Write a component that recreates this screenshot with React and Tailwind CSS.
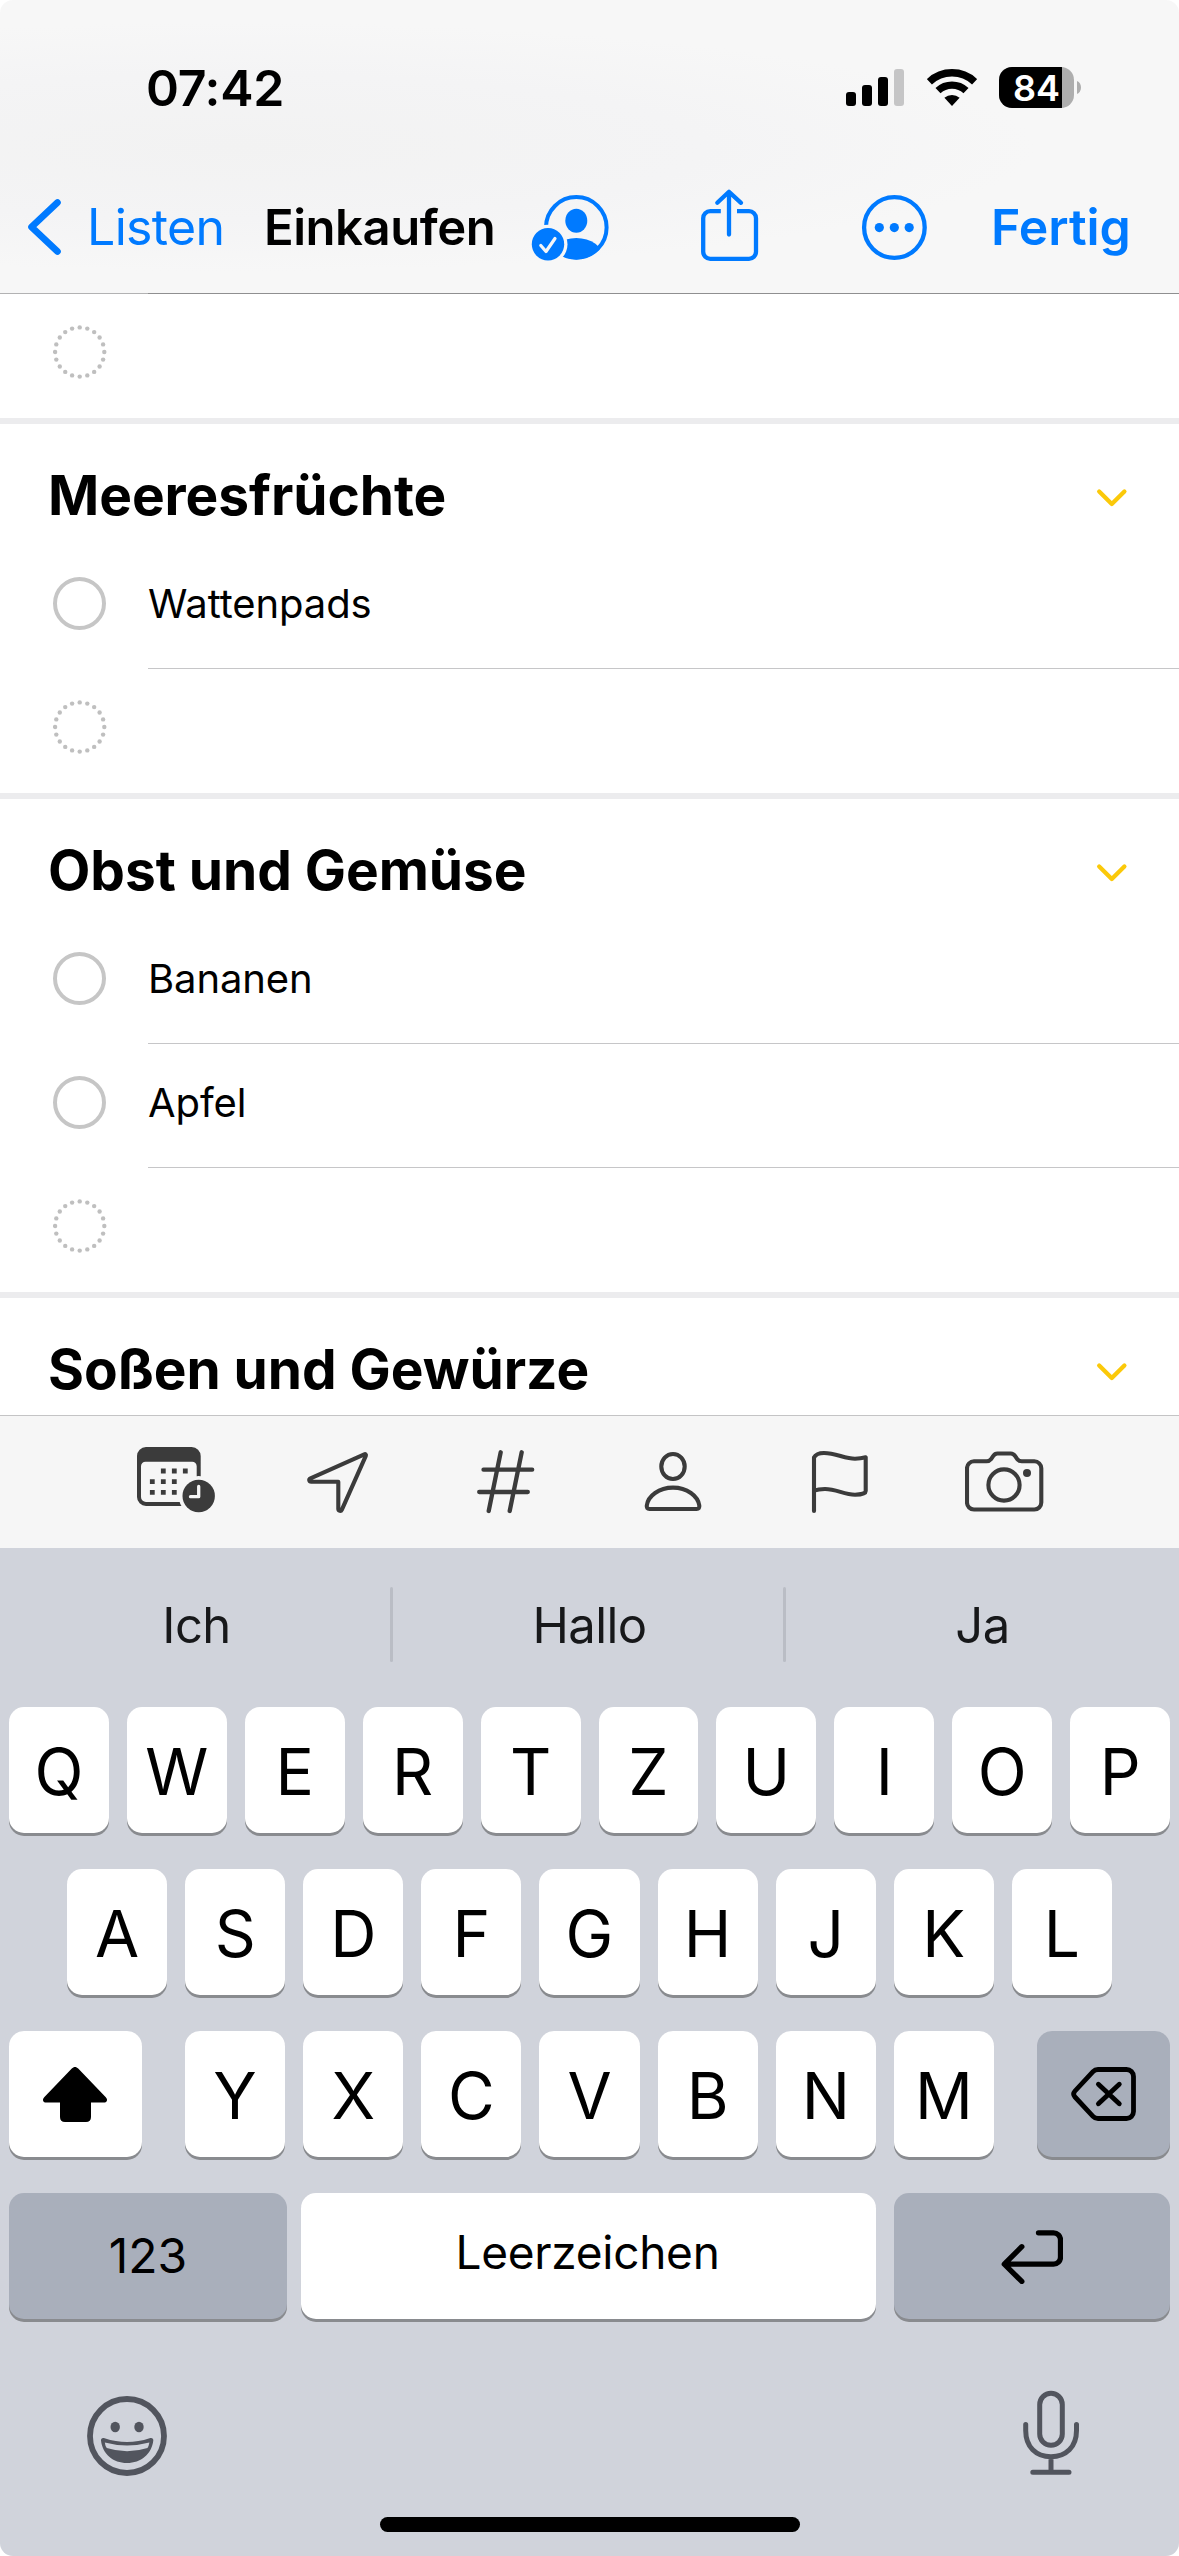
// Reminders list "Einkaufen" with the German keyboard open

const sections = [
  { title: 'Meeresfrüchte', items: ['Wattenpads'] },
  { title: 'Obst und Gemüse', items: ['Bananen', 'Apfel'] },
]

const suggestions = ['Ich', 'Hallo', 'Ja']

function StatusBar() {
  return (
    <div className="flex h-[175px] items-center justify-between pl-[146px] pr-[98px]">
      <span className="pt-[2px] text-[50px] font-semibold tracking-[-0.3px]">07:42</span>
      <div className="flex items-center">
        <svg className="h-[37px] w-[58px]" viewBox="0 0 58 37">
          <rect x="0" y="23" width="10" height="14" rx="3" />
          <rect x="16" y="16" width="10" height="21" rx="3" />
          <rect x="32" y="8" width="10" height="29" rx="3" />
          <rect x="48" y="0" width="10" height="37" rx="3" fill="#c5c5c6" />
        </svg>
        <svg className="ml-[23px] h-[37px] w-[50px]" viewBox="0 0 50 37">
          <path d="M2.4 12.7A33 33 0 0 1 47.6 12.7" fill="none" stroke="#000" strokeWidth="7.4" />
          <path d="M11 21.6A20.6 20.6 0 0 1 39 21.6" fill="none" stroke="#000" strokeWidth="7.4" />
          <path d="M25 37l-7.6-8.2a11.6 11.6 0 0 1 15.2 0z" />
        </svg>
        <div className="ml-[22px] flex h-[41px] w-[75px] overflow-hidden rounded-[13px] bg-[#aeaeae]">
          <div className="flex h-full w-[63px] items-center bg-black pl-[14px] text-[36px] font-semibold text-white">
            84
          </div>
        </div>
        <svg className="ml-[3px] h-[13px] w-[4px]" viewBox="0 0 4 13">
          <path d="M0 0c2.6 1.2 4 3.6 4 6.5s-1.4 5.3-4 6.5z" fill="#aeaeae" />
        </svg>
      </div>
    </div>
  )
}

function NavBar() {
  return (
    <div className="flex h-[104px] items-center pl-[27px] text-[50px] text-[#007aff]">
      <svg className="h-[58px] w-[35px] shrink-0" viewBox="0 0 35 58" fill="none" stroke="#007aff" strokeWidth="6.6" strokeLinecap="round" strokeLinejoin="round">
        <path d="M30.5 4.5L4.5 29l26 24.5" />
      </svg>
      <span className="ml-[25px] w-[138px] tracking-[-0.64px]">Listen</span>
      <h1 className="ml-[39px] w-[236px] pt-[2px] text-[49px] font-semibold tracking-[-0.46px] text-black">Einkaufen</h1>

      {/* Shared list */}
      <svg className="ml-[31px] h-[67px] w-[79px] shrink-0" viewBox="0 0 79 67">
        <defs>
          <mask id="badge-gap">
            <rect width="79" height="67" fill="#fff" />
            <circle cx="17" cy="50.3" r="19.5" fill="#000" />
          </mask>
          <clipPath id="avatar-clip">
            <circle cx="45.3" cy="33.4" r="32" />
          </clipPath>
        </defs>
        <g mask="url(#badge-gap)">
          <circle cx="45.3" cy="33.4" r="30.3" fill="none" stroke="#007aff" strokeWidth="4" />
          <ellipse cx="45.3" cy="26.8" rx="11" ry="12" fill="#007aff" />
          <ellipse cx="45.3" cy="64" rx="27" ry="20" fill="#007aff" clipPath="url(#avatar-clip)" />
        </g>
        <circle cx="17" cy="50.3" r="16.2" fill="#007aff" />
        <path d="M9.8 51.5l5.2 6L24 44.5" fill="none" stroke="#f6f6f7" strokeWidth="3.2" strokeLinecap="round" strokeLinejoin="round" />
      </svg>

      <svg className="ml-[88px] h-[80px] w-[63px] shrink-0" viewBox="0 0 63 80" fill="none" stroke="#007aff" strokeWidth="4.3" strokeLinejoin="round">
        <path d="M22.8 24.2H12.2a7 7 0 0 0-7 7V64.8a7 7 0 0 0 7 7H51a7 7 0 0 0 7-7V31.2a7 7 0 0 0-7-7H39" />
        <path d="M31 5.500V47.5M19.3 15.8L31 4.8l12 11" strokeLinecap="round" />
      </svg>

      <svg className="ml-[99px] h-[69px] w-[69px] shrink-0" viewBox="0 0 69 69" fill="#007aff">
        <circle cx="34.4" cy="34.5" r="30.3" fill="none" stroke="#007aff" strokeWidth="4.3" />
        <circle cx="19.3" cy="34.6" r="4.6" />
        <circle cx="34.3" cy="34.6" r="4.6" />
        <circle cx="49.2" cy="34.6" r="4.6" />
      </svg>
      <span className="ml-[62px] font-semibold tracking-[-0.07px]">Fertig</span>
    </div>
  )
}

function EmptyCircle() {
  const dots = Array.from({ length: 20 }, (_, i) => (i * Math.PI) / 10)
  return (
    <svg className="ml-[53px] h-[54px] w-[54px]" viewBox="0 0 54 54" fill="#bfbfbf">
      {dots.map((a) => (
        <circle key={a} cx={26.7 + 24.6 * Math.cos(a)} cy={27 + 24.6 * Math.sin(a)} r="2.2" />
      ))}
    </svg>
  )
}

function EmptyRow() {
  return (
    <div className="flex h-[124px] items-center pb-[8px]">
      <EmptyCircle />
    </div>
  )
}

function Item({ text }) {
  return (
    <div className="flex h-[124px]">
      <div className="flex w-[148px] items-center pb-[8px]">
        <div className="ml-[53px] size-[53px] rounded-full border-4 border-[#c6c6c6]" />
      </div>
      <div className="flex flex-1 items-center border-b border-[#c6c6c8] pb-[5px] text-[40px] tracking-[-0.1px]">
        {text}
      </div>
    </div>
  )
}

function SectionHeader({ title }) {
  return (
    <div className="flex h-[121px] items-center justify-between pl-[48px] pr-[51px]">
      <h2 className="pt-[21px] text-[55px] leading-[66px] font-bold tracking-[-0.05px]">{title}</h2>
      <svg className="mt-[26px] h-[20px] w-[32px]" viewBox="0 0 32 20" fill="none" stroke="#fbc90a" strokeWidth="4.3" strokeLinecap="round" strokeLinejoin="round">
        <path d="M3.2 3.500L15.8 16 28.4 3.5" />
      </svg>
    </div>
  )
}

function Toolbar() {
  return (
    <div className="flex h-[133px] shrink-0 items-center gap-[78px] border-t border-[#c4c4c5] bg-[#f6f6f6] pl-[125px] text-[#3b3b3b]">
      {/* Date */}
      <svg className="h-[72px] w-[90px] shrink-0" viewBox="0 0 90 72" fill="currentColor">
        <defs>
          <mask id="clock-gap">
            <rect width="90" height="72" fill="#fff" />
            <circle cx="73.7" cy="50" r="20" fill="#000" />
          </mask>
        </defs>
        <g mask="url(#clock-gap)">
          <path
            fillRule="evenodd"
            d="M21 1H66.7a9 9 0 0 1 9 9V51a9 9 0 0 1-9 9H21a9 9 0 0 1-9-9V10a9 9 0 0 1 9-9zM20.5 15.8a4.5 4.5 0 0 0-4.5 4.5V51a5 5 0 0 0 5 5H66.7a5 5 0 0 0 5-5V20.3a4.5 4.5 0 0 0-4.5-4.5z"
          />
          <path d="M35.9 22.6h4.8v4.8h-4.8zM46.9 22.6h4.8v4.8h-4.8zM57.9 22.6h4.8v4.8h-4.8zM24.9 33.3h4.8v4.8h-4.8zM35.9 33.3h4.8v4.8h-4.8zM46.9 33.3h4.8v4.8h-4.8zM24.9 43.9h4.8v4.8h-4.8zM35.9 43.9h4.8v4.8h-4.8zM46.9 43.9h4.8v4.8h-4.8z" />
        </g>
        <circle cx="73.7" cy="50" r="16.2" />
        <path d="M73.7 40.5V50.7H65.5" fill="none" stroke="#f6f6f6" strokeWidth="3.3" strokeLinecap="round" strokeLinejoin="round" />
      </svg>

      {/* Location */}
      <svg className="h-[72px] w-[90px] shrink-0" viewBox="0 0 90 72" fill="none" stroke="currentColor" strokeWidth="4.1" strokeLinejoin="round">
        <path d="M71.3 8.3L17.5 32.3c-2 .9-1.5 3.4.7 3.4H45.3V62.8c0 2.4 2.7 2.8 3.6.8L72.8 9.8c.5-1.1-.4-2-1.5-1.5z" />
      </svg>

      {/* Tag */}
      <svg className="h-[72px] w-[90px] shrink-0" viewBox="0 0 90 72" fill="none" stroke="currentColor" strokeWidth="4.3" strokeLinecap="round">
        <path d="M39.7 6.3l-12 58.7M60.7 6.3l-12 58.7M22.5 23.7H71.2M18.2 46H66.8" />
      </svg>

      {/* Assignee */}
      <svg className="h-[72px] w-[90px] shrink-0" viewBox="0 0 90 72" fill="none" stroke="currentColor" strokeWidth="4.1" strokeLinejoin="round">
        <ellipse cx="44" cy="20.5" rx="11.7" ry="12.5" />
        <path d="M20.5 63c-2.2 0-3-1.4-2.7-3.5C19 50 30 41.6 44 41.6S69 50 70.3 59.5c.3 2.1-.5 3.5-2.7 3.5z" />
      </svg>

      {/* Flag */}
      <svg className="h-[72px] w-[90px] shrink-0" viewBox="0 0 90 72" fill="none" stroke="currentColor" strokeWidth="4.1" strokeLinecap="round" strokeLinejoin="round">
        <path d="M17 65V11.5C18.5 8.5 22 7 27 7c12 0 20.5 5.7 31 5.7 4 0 7-.4 10.7-1.4V45c0 2.5-5 3.7-10.7 3.7C47 48.7 39.5 43 28 43c-4.5 0-8 .5-11 1.7" />
      </svg>

      {/* Camera */}
      <svg className="h-[72px] w-[90px] shrink-0" viewBox="0 0 90 72" fill="none" stroke="currentColor" strokeWidth="4.1" strokeLinejoin="round">
        <path d="M9 15.3H21.5c2.2 0 3.3-.6 4.4-2l2.2-3.2c1.2-1.8 2.3-2.6 4.4-2.6H45.8c2.1 0 3.2.8 4.4 2.6l2.2 3.2c1.1 1.4 2.2 2 4.4 2H69.3a7 7 0 0 1 7 7V56.5a7 7 0 0 1-7 7H9a7 7 0 0 1-7-7V22.3a7 7 0 0 1 7-7z" />
        <circle cx="39" cy="39" r="15.6" />
        <circle cx="62" cy="27" r="4" fill="currentColor" stroke="none" />
      </svg>
    </div>
  )
}

function Key({ children }) {
  return (
    <div className="flex h-[126px] flex-1 items-center justify-center rounded-[15px] bg-white pt-[3px] text-[64px] shadow-[0_3px_0_#898b8f]">
      {children}
    </div>
  )
}

function KeyRow({ letters }) {
  return letters.split('').map((l) => <Key key={l}>{l}</Key>)
}

function Keyboard() {
  return (
    <div className="flex flex-1 flex-col bg-[#d0d3db]">
      <div className="flex h-[159px] items-center pb-[6px] text-[49px] text-[#17181a]">
        {suggestions.map((s, i) => (
          <div key={s} className="flex flex-1 items-center">
            {i > 0 && <div className="-ml-[3px] h-[75px] w-[3px] rounded-full bg-[#babdc5]" />}
            <span className="flex-1 pt-[2px] text-center tracking-[-0.6px]">{s}</span>
          </div>
        ))}
      </div>

      <div className="flex flex-col gap-[36px] px-[9px]">
        <div className="flex gap-[18px]">
          <KeyRow letters="QWERTZUIOP" />
        </div>
        <div className="flex gap-[18px] px-[58px]">
          <KeyRow letters="ASDFGHJKL" />
        </div>
        <div className="flex gap-[43px]">
          <div className="flex h-[126px] w-[133px] items-center justify-center rounded-[15px] bg-white shadow-[0_3px_0_#898b8f]">
            <svg className="mr-[2px] h-[55px] w-[64px]" viewBox="0 0 64 55">
              <path d="M28.8 1.6c1.9-2.1 4.5-2.1 6.4 0l27.6 28.6c2.4 2.6 1 5.3-2 5.3H48V50c0 3.3-1.8 5-5 5H22c-3.2 0-5-1.7-5-5V35.5H3.2c-3 0-4.4-2.7-2-5.3z" />
            </svg>
          </div>
          <div className="flex flex-1 gap-[18px]">
            <KeyRow letters="YXCVBNM" />
          </div>
          <div className="flex h-[126px] w-[133px] items-center justify-center rounded-[15px] bg-[#a9afbb] shadow-[0_3px_0_#898b8f]">
            <svg className="h-[54px] w-[65px]" viewBox="0 0 65 54" fill="none" stroke="#000" strokeWidth="4.8" strokeLinejoin="round" strokeLinecap="round">
              <path d="M27 2.5H55.5a7 7 0 0 1 7 7V44.5a7 7 0 0 1-7 7H27c-2 0-3.7-.8-5-2.2L4 30c-1.8-2-1.8-4 0-6L22 4.7c1.3-1.4 3-2.2 5-2.2z" />
              <path d="M27.4 17.2l20.9 19.6M48.3 17.2L27.4 36.8" />
            </svg>
          </div>
        </div>
        <div className="flex h-[126px] text-[46px]">
          <div className="flex w-[278px] items-center justify-center rounded-[15px] bg-[#a9afbb] text-[48px] shadow-[0_3px_0_#898b8f]">
            123
          </div>
          <div className="ml-[14px] flex flex-1 items-center justify-center rounded-[15px] bg-white pr-[2px] pb-[7px] tracking-[-0.27px] shadow-[0_3px_0_#898b8f]">
            Leerzeichen
          </div>
          <div className="ml-[18px] flex w-[276px] items-center justify-center rounded-[15px] bg-[#a9afbb] shadow-[0_3px_0_#898b8f]">
            <svg className="mt-[2px] h-[54px] w-[62px]" viewBox="0 0 62 54" fill="none" stroke="#000" strokeWidth="5.3" strokeLinejoin="round" strokeLinecap="round">
              <path d="M37.5 2.8H52.5a7 7 0 0 1 7 7V27.2a7 7 0 0 1-7 7H4M20.8 16.7L3.3 34.2l17.5 17.2" />
            </svg>
          </div>
        </div>
      </div>

      <div className="mt-[71px] flex items-center justify-between pl-[87px] pr-[99px]">
        <svg className="mt-[6px] h-[80px] w-[80px]" viewBox="0 0 80 80" fill="#52555e">
          <circle cx="40" cy="40" r="37" fill="none" stroke="#52555e" strokeWidth="5.8" />
          <ellipse cx="28.2" cy="31" rx="4.7" ry="5.3" />
          <ellipse cx="52" cy="31" rx="4.7" ry="5.3" />
          <path
            fillRule="evenodd"
            d="M14 44.5c-.2-2.3 1.5-3 3.6-2.3Q40 49.800 62.600 42.2c2.1-.7 4 0 3.7 2.3C64.8 58 54 67 40 67S15.5 58 14 44.5zM17.8 46.5Q18.2 50 19.8 52 40 58.5 60.5 52 61.8 50 62.4 46.5 40 52.5 17.8 46.5z"
          />
        </svg>
        <svg className="h-[86px] w-[57px]" viewBox="0 0 57 86" fill="none" stroke="#52555e" strokeWidth="5" strokeLinecap="round">
          <rect x="16.7" y="3.3" width="22.6" height="52" rx="11.3" />
          <path d="M2.7 34.5V40.5C2.7 57 13 66.7 28 66.7S53.5 57 53.5 40.5V34.5M28 67V82M9.8 82.3H46" />
        </svg>
      </div>
      <div className="mt-[41px] ml-[380px] h-[15px] w-[420px] rounded-full bg-black" />
    </div>
  )
}

export default function App() {
  return (
    <div className="h-[2556px] w-[1179px] bg-white font-['Inter',sans-serif] text-black">
      <div className="flex h-full flex-col overflow-hidden rounded-[13px]">
        <header className="flex h-[294px] shrink-0 flex-col bg-[radial-gradient(ellipse_at_20%_50%,#f2f2f2,#f4f4f5_35%,#f7f7f7_60%)]">
          <StatusBar />
          <NavBar />
          <div className="mt-auto flex h-px">
            <div className="w-[148px] bg-[#b2b2b3]" />
            <div className="flex-1 bg-[#8f8f90]" />
          </div>
        </header>

        <main className="h-[1121px] shrink-0 overflow-hidden bg-white">
          <EmptyRow />
          {sections.map((s) => (
            <section key={s.title} className="border-t-[6px] border-[#ececee]">
              <SectionHeader title={s.title} />
              {s.items.map((t) => (
                <Item key={t} text={t} />
              ))}
              <EmptyRow />
            </section>
          ))}
          <section className="border-t-[6px] border-[#ececee]">
            <SectionHeader title="Soßen und Gewürze" />
          </section>
        </main>

        <Toolbar />
        <Keyboard />
      </div>
    </div>
  )
}
